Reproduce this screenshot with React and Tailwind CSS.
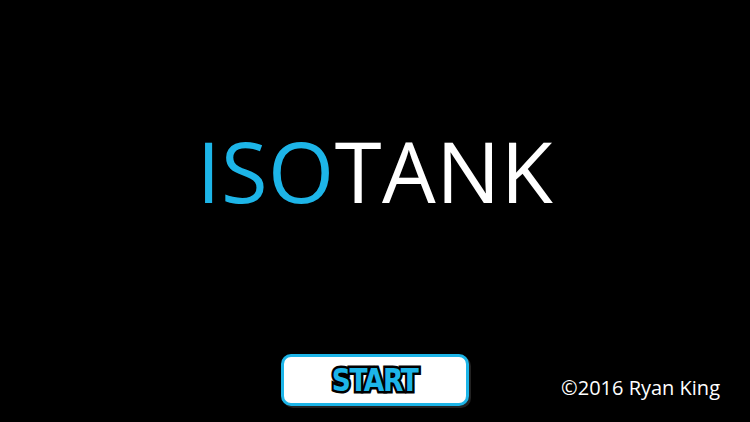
import React from 'react';

const App = () => {
  return (
    <div className="w-[750px] h-[422px] bg-black flex flex-col overflow-hidden" style={{ fontFamily: '"Open Sans", sans-serif' }}>
      {/* Title */}
      <div className="flex justify-center pt-[128px]">
        <h1 className="text-[85px] leading-none tracking-[0.5px] font-normal">
          <span className="text-[#1db5e8]">ISO</span>
          <span className="text-white">TANK</span>
        </h1>
      </div>

      {/* Bottom row */}
      <div className="mt-auto mb-[16px] grid grid-cols-[1fr_188px_1fr] items-center">
        <div />
        <button className="h-[52px] w-[188px] rounded-[10px] border-[3px] border-[#1db5e8] bg-white flex items-center justify-center shadow-[2px_2px_0_#222]">
          <span
            className="text-[32px] font-bold text-[#1db5e8] tracking-[-1.5px] leading-none inline-block scale-x-[0.92]"
            style={{ fontFamily: '"DejaVu Sans Condensed", "DejaVu Sans", sans-serif', WebkitTextStroke: '5px #000', paintOrder: 'stroke fill' }}
          >
            START
          </span>
        </button>
        <div className="flex justify-end pr-[30px] pt-[16px]">
          <span className="text-white text-[20px] leading-none">©2016 Ryan King</span>
        </div>
      </div>
    </div>
  );
};

export default App;
